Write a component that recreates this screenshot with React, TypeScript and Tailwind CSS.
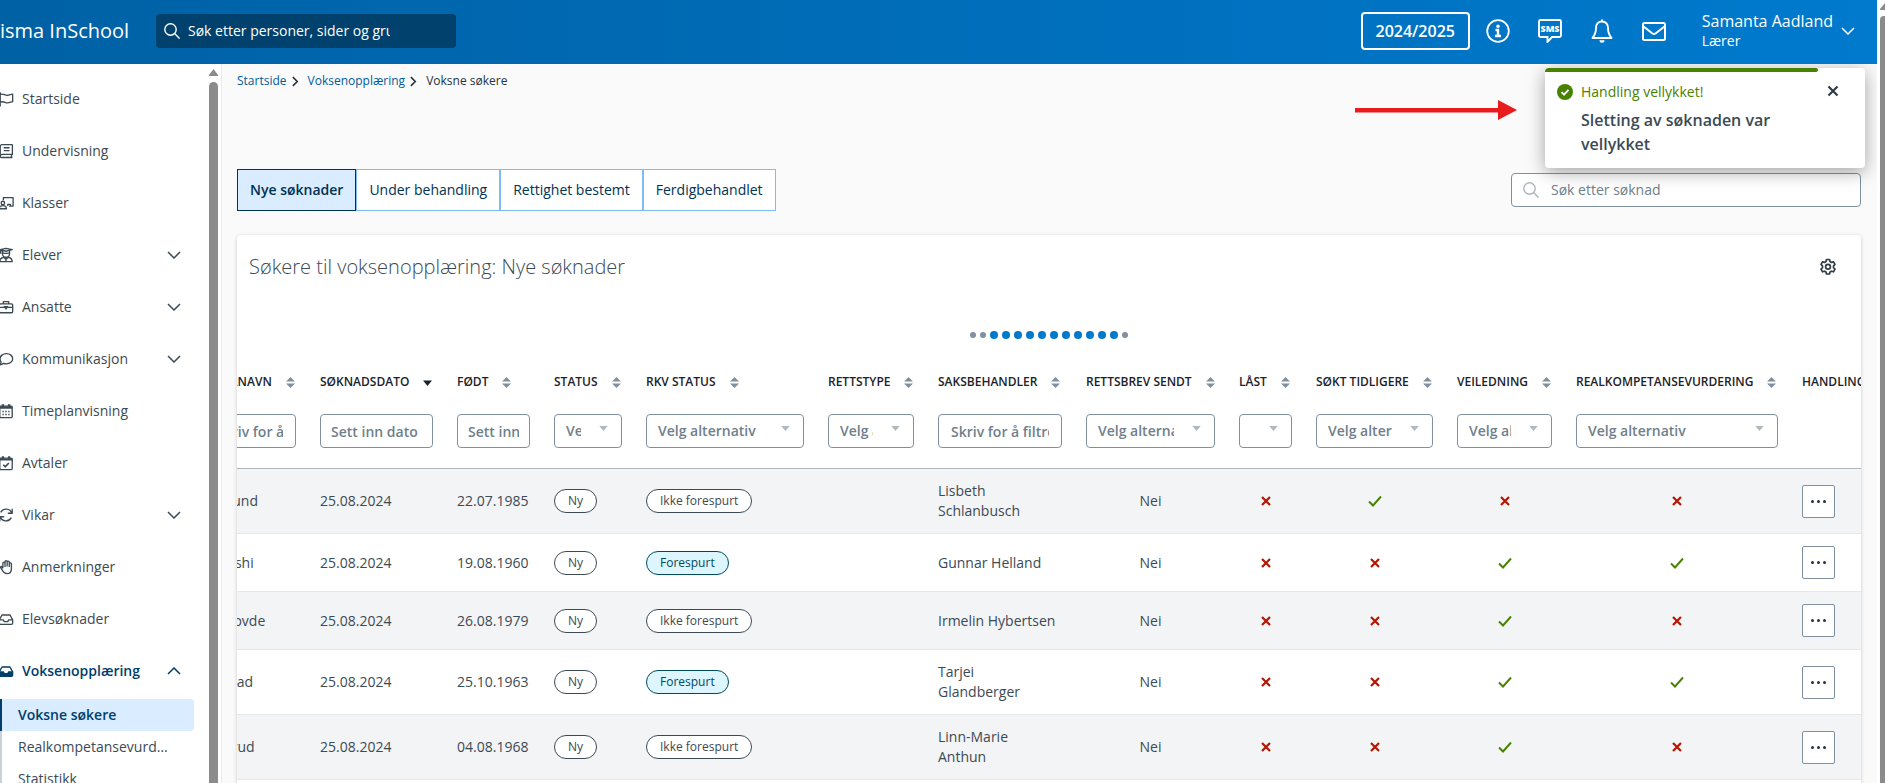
import { useLayoutEffect, useRef } from 'react'
import type { ReactNode } from 'react'
import clsx from 'clsx'

const NAV = [
  { label: 'Startside', icon: 'flag' },
  { label: 'Undervisning', icon: 'book' },
  { label: 'Klasser', icon: 'class' },
  { label: 'Elever', icon: 'student', expandable: true },
  { label: 'Ansatte', icon: 'briefcase', expandable: true },
  { label: 'Kommunikasjon', icon: 'chat', expandable: true },
  { label: 'Timeplanvisning', icon: 'calendar' },
  { label: 'Avtaler', icon: 'calendarCheck' },
  { label: 'Vikar', icon: 'refresh', expandable: true },
  { label: 'Anmerkninger', icon: 'hand' },
  { label: 'Elevsøknader', icon: 'inbox' },
  { label: 'Voksenopplæring', icon: 'inboxSolid', expandable: true, open: true },
]

const SUB_NAV = ['Voksne søkere', 'Realkompetansevurdering', 'Statistikk']

const TABS = ['Nye søknader', 'Under behandling', 'Rettighet bestemt', 'Ferdigbehandlet']

type Column = {
  label: string
  width: number
  filter?: 'text' | 'date' | 'select'
  sorted?: boolean
}

const COLUMNS: Column[] = [
  { label: 'Etternavn', width: 117, filter: 'text' },
  { label: 'Søknadsdato', width: 137, filter: 'date', sorted: true },
  { label: 'Født', width: 97, filter: 'date' },
  { label: 'Status', width: 92, filter: 'select' },
  { label: 'RKV status', width: 182, filter: 'select' },
  { label: 'Rettstype', width: 110, filter: 'select' },
  { label: 'Saksbehandler', width: 148, filter: 'text' },
  { label: 'Rettsbrev sendt', width: 153, filter: 'select' },
  { label: 'Låst', width: 77, filter: 'select' },
  { label: 'Søkt tidligere', width: 141, filter: 'select' },
  { label: 'Veiledning', width: 119, filter: 'select' },
  { label: 'Realkompetansevurdering', width: 226, filter: 'select' },
  { label: 'Handlinger', width: 130 },
]

const ROWS = [
  { name: 'Haglund', born: '22.07.1985', asked: false, handler: 'Lisbeth Schlanbusch', flags: [false, true, false, false] },
  { name: 'Berrishi', born: '19.08.1960', asked: true, handler: 'Gunnar Helland', flags: [false, false, true, true] },
  { name: 'Skagovde', born: '26.08.1979', asked: false, handler: 'Irmelin Hybertsen', flags: [false, false, true, false] },
  { name: 'Fjelstad', born: '25.10.1963', asked: true, handler: 'Tarjei Glandberger', flags: [false, false, true, true] },
  { name: 'Hillerud', born: '04.08.1968', asked: false, handler: 'Linn-Marie Anthun', flags: [false, false, true, false] },
  { name: 'Moen', born: '12.03.1971', asked: false, handler: 'Gunnar Helland', flags: [false, false, true, false] },
]

const LOADER_DOTS = Array.from({ length: 14 }, (_, i) => i > 1 && i < 13)

const NAV_ICONS: Record<string, ReactNode> = {
  flag: <path d="M2.500 1.500v16M2.500 4c3-2 5.500 1.500 8.500.8 1.800-.4 3-.9 5.500-1.300v8.500c-2.500.6-4 1.300-6 1.300-2.500 0-4.500-2.300-8-.8" />,
  book: (
    <>
      <path d="M16.200 1.800H4.500A2 2 0 0 0 2.500 3.800v11a1.500 1.500 0 0 0 1.500 1.500h12.200" />
      <path d="M16.200 1.800v11H4.500a1.700 1.700 0 0 0-1.700 2M6.500 5.300h6.500M6.500 8.500h6.500M15.200 12.800v3.500" />
    </>
  ),
  class: (
    <>
      <path d="M6 6V3h11v9.500h-4.500M11 12.500v-2h3v2" />
      <circle cx="5.500" cy="9" r="2" />
      <path d="M1.500 15.500c0-2.500 1.500-3.500 4-3.500s4 1 4 3.500z" />
    </>
  ),
  student: (
    <>
      <path d="M2 3l7-1.500L16 3 9 4.800zM5 4v3.500a4 4 0 0 0 8 0V4M3 4v3.500M5.500 6.500c2.500 1 4.500.8 7 0" />
      <path d="M2 16.500c0-3 2-4.500 4.500-5L9 14l2.500-2.500c2.500.5 4.500 2 4.500 5zM9 14v2.500" />
    </>
  ),
  briefcase: (
    <>
      <rect x="1.500" y="5.500" width="15" height="10" rx="1.200" />
      <path d="M6 5.500V3h6v2.500M1.500 9.500h5.500M11 9.500h5.500" />
      <path d="M7 8.500h4L9 11.200z" fill="currentColor" />
    </>
  ),
  chat: <path d="M9.500 3c4 0 7 2.500 7 5.700s-3 5.700-7 5.700c-1.200 0-2.300-.2-3.300-.6C5 15 3.500 15.500 2 15.500c1-1 1.500-2 1.500-3-.8-1-1.200-2.300-1.200-3.700C2.300 5.500 5.500 3 9.500 3z" />,
  calendar: (
    <>
      <rect x="2" y="3.500" width="14" height="13" rx="1.200" />
      <path d="M2 5h14M5.500 1.500v3M12.500 1.500v3" strokeWidth="2.800" />
      <path d="M5 9.500h1.500M8.200 9.500h1.600M11.500 9.500H13M5 13h1.500M8.200 13h1.600M11.500 13H13" strokeWidth="1.800" />
    </>
  ),
  calendarCheck: (
    <>
      <rect x="2" y="3.500" width="14" height="13" rx="1.200" />
      <path d="M2 5h14M5.500 1.500v3M12.500 1.500v3" strokeWidth="2.400" />
      <path d="M6 11l2.200 2.200L12.200 9" strokeWidth="1.900" />
    </>
  ),
  refresh: <path d="M15.500 7A6.800 6.800 0 0 0 3 6M16 2v5h-5M2.500 11A6.800 6.800 0 0 0 15 12M2 16v-5h5" />,
  hand: <path d="M5.500 10.500V4.800a1.200 1.200 0 0 1 2.400 0V9M7.900 8.500V3a1.200 1.200 0 0 1 2.400 0v5.500M10.300 8.500V3.500a1.200 1.200 0 0 1 2.400 0V9M12.700 9V5.500a1.200 1.200 0 0 1 2.400 0V11c0 3.500-2 5.500-5 5.500-2.500 0-4-1.500-5-3.500L3 9.800c-.5-1 .8-1.800 1.500-1l1 1.700" />,
  inbox: <path d="M1.500 10l3-5.500h9l3 5.500v3.500a1.500 1.500 0 0 1-1.500 1.500H3a1.500 1.500 0 0 1-1.500-1.500zM1.500 10H6l1 2h4l1-2h4.500" />,
  inboxSolid: (
    <>
      <path d="M1.500 10l3-5.500h9l3 5.500" />
      <path d="M1.500 10H6l1 2h4l1-2h4.500v3.500a1.500 1.500 0 0 1-1.500 1.500H3a1.500 1.500 0 0 1-1.500-1.500z" fill="currentColor" />
    </>
  ),
}

function NavIcon({ name }: { name: string }) {
  return (
    <svg viewBox="0 0 18 18" className="size-4 shrink-0" fill="none" stroke="currentColor" strokeWidth="1.5" strokeLinejoin="round">
      {NAV_ICONS[name]}
    </svg>
  )
}

function Chevron({ className }: { className?: string }) {
  return (
    <svg viewBox="0 0 14 8" className={className} fill="none" stroke="currentColor" strokeWidth="1.500">
      <path d="M1 1l6 6 6-6" />
    </svg>
  )
}

function SearchIcon({ className }: { className?: string }) {
  return (
    <svg viewBox="0 0 16 16" className={className} fill="none" stroke="currentColor" strokeWidth="1.400">
      <circle cx="6.500" cy="6.500" r="5.700" />
      <path d="M10.600 10.600l5 5" />
    </svg>
  )
}

function Crumb() {
  return (
    <svg viewBox="0 0 8 12" className="h-[11px] w-[7px]" fill="none" stroke="#27323a" strokeWidth="1.800">
      <path d="M1 1l5 5-5 5" />
    </svg>
  )
}

function Flag({ value }: { value: boolean }) {
  return value ? (
    <svg viewBox="0 0 14 12" role="img" aria-label="Ja" className="mx-auto h-3 w-3.5" fill="none" stroke="#498200" strokeWidth="1.900">
      <path d="M1 6.500l4 4L13 1.500" />
    </svg>
  ) : (
    <svg viewBox="0 0 10 10" role="img" aria-label="Nei" className="mx-auto size-2.5" fill="none" stroke="#b71500" strokeWidth="2.200">
      <path d="M1 1l8 8M9 1l-8 8" />
    </svg>
  )
}

function SortIcon({ sorted }: { sorted?: boolean }) {
  return sorted ? (
    <svg viewBox="0 0 9 11" className="h-[11px] w-[9px] shrink-0" fill="#1b2329">
      <path d="M0 3.500h9L4.500 9z" />
    </svg>
  ) : (
    <svg viewBox="0 0 9 11" className="h-[11px] w-[9px] shrink-0" fill="#8190a0">
      <path d="M0 4.500h9L4.500 0zM0 6.500h9L4.500 11z" />
    </svg>
  )
}

function Header() {
  return (
    <header className="flex h-16 shrink-0 items-center overflow-hidden bg-gradient-to-r from-[#0061a5] to-[#007ace] pb-0.5 pr-[22px] text-white">
      <span className="-ml-3 w-[168px] shrink-0 whitespace-nowrap text-xl">Visma InSchool</span>
      <label className="flex h-[34px] w-[300px] items-center gap-2 rounded bg-[#00416d] pl-2">
        <SearchIcon className="size-4 shrink-0" />
        <input
          type="text"
          aria-label="Søk"
          placeholder="Søk etter personer, sider og grupper"
          className="w-[202px] bg-transparent text-sm outline-none placeholder:text-white"
        />
      </label>
      <button className="ml-auto h-[38px] w-[109px] rounded border-2 border-white text-base font-semibold">2024/2025</button>
      <div className="ml-4 flex items-center gap-7">
        <button aria-label="Informasjon">
          <svg viewBox="0 0 24 24" className="size-6" fill="none" stroke="currentColor" strokeWidth="2">
            <circle cx="12" cy="12" r="10.800" strokeWidth="1.800" />
            <circle cx="12" cy="7.300" r="1.700" fill="currentColor" stroke="none" />
            <path d="M9.500 11H12v6M9 17h6" strokeWidth="2.400" />
          </svg>
        </button>
        <button aria-label="SMS">
          <svg viewBox="0 0 24 24" className="size-6" fill="none" stroke="currentColor" strokeWidth="1.900">
            <path d="M2.500 1h19A1.500 1.500 0 0 1 23 2.500v14a1.500 1.500 0 0 1-1.500 1.500H14L9.500 23v-5h-7A1.500 1.500 0 0 1 1 16.500V2.500A1.500 1.500 0 0 1 2.500 1z" />
            <text x="12" y="12.800" textAnchor="middle" fontSize="9" fontWeight="800" fill="currentColor" stroke="none">SMS</text>
          </svg>
        </button>
        <button aria-label="Varsler">
          <svg viewBox="0 0 24 24" className="size-6" fill="none" stroke="currentColor" strokeWidth="1.900" strokeLinejoin="round">
            <path d="M12 2.500c-4 0-6 3-6 6.500 0 5-1.500 7.500-3.500 10h19c-2-2.500-3.500-5-3.500-10 0-3.500-2-6.500-6-6.500zM12 .5v2" />
            <path d="M9.500 21.300h5a2.500 2.500 0 0 1-5 0z" fill="currentColor" stroke="none" />
          </svg>
        </button>
        <button aria-label="Meldinger">
          <svg viewBox="0 0 24 24" className="size-6" fill="none" stroke="currentColor" strokeWidth="2">
            <rect x="1" y="4" width="22" height="17" rx="1.500" />
            <path d="M1.500 7.500l9 7a2.500 2.500 0 0 0 3 0l9-7" />
          </svg>
        </button>
      </div>
      <button className="ml-9 flex items-center gap-2 text-left">
        <span className="block">
          <span className="block text-base leading-5">Samanta Aadland</span>
          <span className="block text-sm leading-5">Lærer</span>
        </span>
        <Chevron className="h-2 w-3.5" />
      </button>
    </header>
  )
}

function Sidebar() {
  return (
    <aside className="flex w-[222px] shrink-0 border-r border-[#e9ebed] bg-white text-sm text-[#3c4a54]">
      <nav className="w-[209px] shrink-0 overflow-hidden pt-[9px]">
        {NAV.map((item) => (
          <a
            key={item.label}
            href="#"
            className={clsx('-ml-0.5 flex h-[52px] items-center gap-2 pr-7', item.open && 'font-semibold text-[#003e6b]')}
          >
            <NavIcon name={item.icon} />
            <span className="flex-1">{item.label}</span>
            {item.expandable && <Chevron className={clsx('h-2 w-3.5', item.open && 'rotate-180')} />}
          </a>
        ))}
        <ul className="mt-0.5">
          {SUB_NAV.map((label, i) => (
            <li key={label} className="mr-[15px]">
              <a
                href="#"
                className={clsx(
                  'block h-8 truncate border-l-2 pl-4 pr-5 leading-8',
                  i === 0 ? 'rounded-r bg-[#daecff] font-semibold text-[#003e6b] border-[#003e6b]' : 'border-[#cbd1d6]',
                )}
              >
                {label}
              </a>
            </li>
          ))}
        </ul>
      </nav>
      <div className="flex flex-col items-center gap-1.5 pt-[5px]">
        <svg viewBox="0 0 9 7" className="h-[7px] w-[9px]" fill="#8b8b8b">
          <path d="M4.500 0L9 6v1H0V6z" />
        </svg>
        <div className="w-[9px] flex-1 rounded-t-full bg-[#8b8b8b]" />
      </div>
    </aside>
  )
}

function Filter({ column }: { column: Column }) {
  const label = `Filtrer ${column.label}`
  if (column.filter === 'select') {
    return (
      <div className="relative">
        <select
          aria-label={label}
          className="block h-[34px] w-full appearance-none overflow-hidden rounded border border-[#8190a0] bg-white pl-[11px] pr-10 text-sm font-semibold text-[#6f808c]"
        >
          <option>Velg alternativ</option>
        </select>
        <svg viewBox="0 0 10 6" className="pointer-events-none absolute right-3.5 top-3 h-[5px] w-[9px]" fill="#b0b8bf">
          <path d="M0 0h10L5 6z" />
        </svg>
      </div>
    )
  }
  return (
    <input
      type="text"
      aria-label={label}
      placeholder={column.filter === 'date' ? 'Sett inn dato' : 'Skriv for å filtrere'}
      className={clsx(
        'block h-[34px] w-full rounded border border-[#8190a0] bg-white text-sm font-semibold placeholder:text-[#6f808c]',
        column.filter === 'date' ? 'px-2.5' : 'px-3',
      )}
    />
  )
}

function Tag({ tone, children }: { tone: 'plain' | 'info'; children: ReactNode }) {
  return (
    <span
      className={clsx(
        'inline-flex h-6 items-center whitespace-nowrap rounded-full border px-[13px] align-middle text-xs',
        tone === 'info' ? 'border-[#00495f] bg-[#ddf6fe] text-[#00495f]' : 'border-[#3c4a54] bg-white',
      )}
    >
      {children}
    </span>
  )
}

function ApplicantTable() {
  const scroller = useRef<HTMLDivElement>(null)

  useLayoutEffect(() => {
    if (scroller.current) scroller.current.scrollLeft = 46
  }, [])

  return (
    <div ref={scroller} className="overflow-x-auto">
      <table className="w-[1729px] min-w-full table-fixed border-collapse text-sm text-[#3c4a54]">
        <colgroup>
          {COLUMNS.map((c) => (
            <col key={c.label} style={{ width: c.width }} />
          ))}
        </colgroup>
        <thead>
          <tr className="border-b border-[#aeb5bb]">
            {COLUMNS.map((c) => (
              <th key={c.label} scope="col" className="px-3 pb-5 pt-px text-left align-top font-normal">
                {c.filter ? (
                  <button className="mb-[22px] flex h-5 items-center gap-3.5 text-xs font-semibold uppercase text-[#1b2329]">
                    <span className="whitespace-nowrap">{c.label}</span>
                    <SortIcon sorted={c.sorted} />
                  </button>
                ) : (
                  <span className="block h-5 text-xs font-semibold uppercase leading-5 text-[#1b2329]">{c.label}</span>
                )}
                {c.filter && <Filter column={c} />}
              </th>
            ))}
          </tr>
        </thead>
        <tbody>
          {ROWS.map((row) => (
            <tr key={row.name} className="border-b border-[#e6e9ec] odd:bg-[#f3f4f6]">
              <td className="px-3 py-3">{row.name}</td>
              <td className="px-3 py-3">25.08.2024</td>
              <td className="px-3 py-3">{row.born}</td>
              <td className="px-3 py-3">
                <Tag tone="plain">Ny</Tag>
              </td>
              <td className="px-3 py-3">
                {row.asked ? <Tag tone="info">Forespurt</Tag> : <Tag tone="plain">Ikke forespurt</Tag>}
              </td>
              <td />
              <td className="py-3 pl-3 pr-4">{row.handler}</td>
              <td className="px-3 py-3 text-center">Nei</td>
              {row.flags.map((flag, i) => (
                <td key={i} className="px-3 py-3">
                  <Flag value={flag} />
                </td>
              ))}
              <td className="px-3 py-3">
                <button
                  aria-label={`Handlinger for ${row.name}`}
                  className="flex size-[33px] items-center justify-center gap-[3px] rounded-xs border border-[#8190a0] bg-white"
                >
                  <i className="size-[3px] rounded-full bg-[#27323a]" />
                  <i className="size-[3px] rounded-full bg-[#27323a]" />
                  <i className="size-[3px] rounded-full bg-[#27323a]" />
                </button>
              </td>
            </tr>
          ))}
        </tbody>
      </table>
    </div>
  )
}

function Toast() {
  return (
    <div role="status" className="absolute right-3 top-1 z-10 h-[100px] w-80 overflow-hidden rounded bg-white shadow-[0_4px_18px_rgba(0,0,0,0.35)]">
      <div className="h-1 w-[273px] rounded-r bg-[#498200]" />
      <div className="flex gap-2 pl-3 pt-2">
        <svg viewBox="0 0 16 16" className="mt-1 size-4 shrink-0">
          <circle cx="8" cy="8" r="8" fill="#498200" />
          <path d="M4.500 8.200L7 10.600l4.500-4.800" fill="none" stroke="#fff" strokeWidth="1.800" />
        </svg>
        <div className="w-[220px]">
          <p className="text-sm leading-6 text-[#498200]">Handling vellykket!</p>
          <p className="mt-1 text-base font-semibold leading-6 text-[#3c4a54]">Sletting av søknaden var vellykket</p>
        </div>
        <button aria-label="Lukk" className="ml-[18px] mt-[5px] size-3">
          <svg viewBox="0 0 12 12" className="size-3" fill="none" stroke="#303c45" strokeWidth="2.200">
            <path d="M1.500 1.500l9 9M10.500 1.500l-9 9" />
          </svg>
        </button>
      </div>
    </div>
  )
}

export default function App() {
  return (
    <div className="flex h-screen overflow-hidden bg-[#fafafa] font-['Open_Sans','Noto_Sans',sans-serif]">
      <div className="flex min-w-0 flex-1 flex-col">
        <Header />
        <div className="flex min-h-0 flex-1">
          <Sidebar />
          <main className="relative min-w-0 flex-1 overflow-hidden pl-[15px] pr-4">
            <nav aria-label="Brødsmuler" className="flex h-[34px] items-center gap-[5px] text-xs text-[#27323a]">
              <a href="#" className="text-[#005b9c]">Startside</a>
              <Crumb />
              <a href="#" className="ml-1 text-[#005b9c]">Voksenopplæring</a>
              <Crumb />
              <span className="ml-1">Voksne søkere</span>
            </nav>

            <div className="mt-[71px] flex items-center justify-between">
              <div role="tablist" className="flex text-sm text-[#003253]">
                {TABS.map((tab, i) => (
                  <button
                    key={tab}
                    role="tab"
                    aria-selected={i === 0}
                    className={clsx(
                      'h-[42px] border px-3',
                      i === 0 ? 'border-[#003253] bg-[#daecff] font-semibold' : 'border-[#7dbcf5] bg-white',
                    )}
                  >
                    {tab}
                  </button>
                ))}
              </div>
              <label className="flex h-[34px] w-[350px] items-center gap-3 rounded border border-[#8190a0] bg-white pl-[11px]">
                <SearchIcon className="size-4 shrink-0 text-[#aeb5bb]" />
                <input
                  type="text"
                  aria-label="Søk etter søknad"
                  placeholder="Søk etter søknad"
                  className="w-full bg-transparent text-sm outline-none placeholder:text-[#6f808c]"
                />
              </label>
            </div>

            <section className="mt-6 rounded-t bg-white shadow-[0_1px_4px_rgba(0,0,0,0.18)]">
              <div className="flex h-16 items-center justify-between pl-3 pr-6">
                <h1 className="text-xl font-light text-[#3c4a54]">Søkere til voksenopplæring: Nye søknader</h1>
                <button aria-label="Innstillinger">
                  <svg viewBox="0 0 18 18" className="size-[18px]" fill="none" stroke="#303c45" strokeWidth="1.700" strokeLinejoin="round">
                    <path d="M7.500 1.500h3l.5 2 1.500.9 2-.6 1.500 2.600-1.500 1.400v1.900l1.500 1.500-1.500 2.600-2-.6-1.500.8-.5 2h-3l-.5-2-1.500-.8-2 .6L2 11.200l1.500-1.500V7.800L2 6.400l1.500-2.600 2 .6L7 3.500z" />
                    <circle cx="9" cy="8.800" r="2.400" />
                  </svg>
                </button>
              </div>
              <div role="progressbar" aria-label="Laster" className="flex h-[72px] items-center justify-center gap-1">
                {LOADER_DOTS.map((active, i) => (
                  <span key={i} className={clsx('rounded-full', active ? 'size-2 bg-[#0079cd]' : 'size-1.5 bg-[#8190a0]')} />
                ))}
              </div>
              <ApplicantTable />
            </section>

            <Toast />

            <svg viewBox="0 0 162 20" className="absolute right-[360px] top-9 h-5 w-[162px]" fill="#e81c1c">
              <path d="M0 8h143v4.500H0zM143 0l19 10-19 10z" />
            </svg>
          </main>
        </div>
      </div>

      {/* Page scrollbar */}
      <div className="flex w-2 shrink-0 flex-col items-end gap-1.5 overflow-hidden bg-white pt-[3px]">
        <svg viewBox="0 0 5 7" className="h-[7px] w-[5px]" fill="#8b8b8b">
          <path d="M5 0v7H0V6z" />
        </svg>
        <div className="w-[5px] flex-1 rounded-tl bg-[#8b8b8b]" />
      </div>
    </div>
  )
}
